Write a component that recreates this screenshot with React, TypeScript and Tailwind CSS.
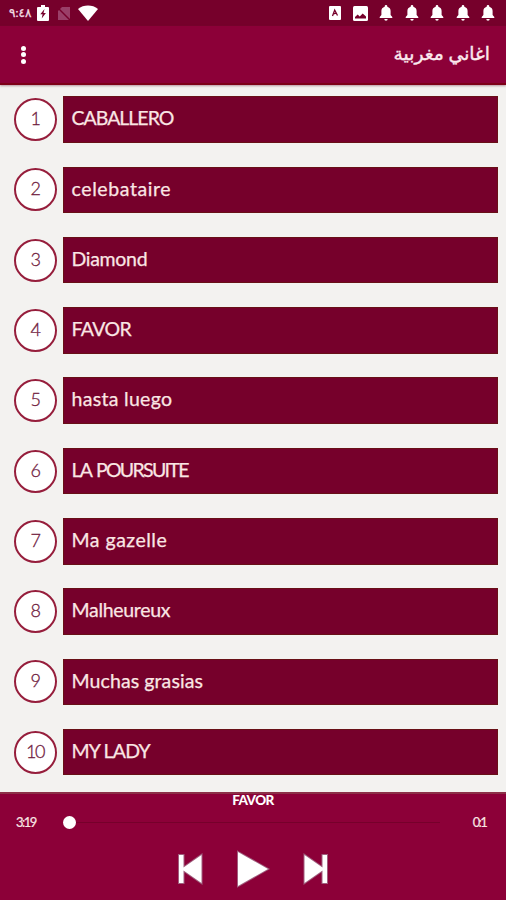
import { useState } from 'react'

const songs = [
  { title: 'CABALLERO', spacing: 'tracking-[-1px]' },
  { title: 'celebataire', spacing: 'tracking-[0.6px]' },
  { title: 'Diamond', spacing: 'tracking-[-0.3px]' },
  { title: 'FAVOR', spacing: 'tracking-[-0.6px]' },
  { title: 'hasta luego', spacing: 'tracking-[0.3px]' },
  { title: 'LA POURSUITE', spacing: 'tracking-[-1.7px] [word-spacing:2px]' },
  { title: 'Ma gazelle', spacing: 'tracking-[0.5px]' },
  { title: 'Malheureux', spacing: 'tracking-[-0.3px]' },
  { title: 'Muchas grasias', spacing: 'tracking-[0.1px]' },
  { title: 'MY LADY', spacing: 'tracking-[-0.8px]' },
]

function BellIcon() {
  return (
    <svg viewBox="0 0 14 16" className="h-4 w-3.5" fill="currentColor">
      <path d="M7 0c-.8 0-1.3.6-1.3 1.3v.5C3.5 2.4 2.4 4 2.4 6v4L.7 12v1h12.6v-1l-1.7-2V6c0-2-1.1-3.6-3.3-4.2v-.5C8.3.6 7.8 0 7 0zM5.3 14a1.7 1.7 0 0 0 3.4 0z" />
    </svg>
  )
}

function StatusBar() {
  return (
    <div className="flex h-[26px] items-center justify-between bg-[#76002b] pl-[9px] pr-[11px] text-white">
      <div className="flex items-center">
        <span dir="ltr" className="w-[23px] whitespace-nowrap text-[12px] leading-none tracking-[-0.6px] text-[#f3dfe6] [-webkit-text-stroke:0.3px_#f3dfe6]">٩:٤٨</span>
        <svg viewBox="0 0 12 16" className="ml-[5px] h-4 w-3" fill="currentColor">
          <path d="M4 0h4v2h3a1 1 0 0 1 1 1v12a1 1 0 0 1-1 1H1a1 1 0 0 1-1-1V3a1 1 0 0 1 1-1h3z" />
          <path fill="#76002b" d="M7.5 4 3.3 9.3h2.3l-.9 4.2 4.2-5.6H6.500z" />
        </svg>
        <svg viewBox="0 0 14 15" className="ml-2 h-[15px] w-3.5" fill="none">
          <path d="M5 1h8v13H1V5z" fill="#9a3f68" />
          <path d="m0 1 14 14" stroke="#76002b" strokeWidth="1.5" />
        </svg>
        <svg viewBox="0 0 20 16" className="ml-[7px] h-4 w-5" fill="currentColor">
          <path d="M0 4C5.5-.6 14.5-.6 20 4L10 16z" />
        </svg>
      </div>
      <div className="flex items-center">
        <svg viewBox="0 0 12 14" className="h-3.5 w-3" fill="currentColor">
          <rect width="12" height="14" rx="1" />
          <path d="m3.5 10 2.200-6 2.800 5.500M4.300 7.800l3.100-.7" fill="none" stroke="#76002b" strokeWidth="1.3" />
        </svg>
        <svg viewBox="0 0 15 15" className="ml-3 h-[15px] w-[15px]" fill="currentColor">
          <rect width="15" height="15" rx="1.5" />
          <path fill="#76002b" d="M2 12.5V11l2.700-2.500 2 2 3-3L13 10.500v2z" />
        </svg>
        <div className="ml-[11px] flex gap-[11.4px]">
          <BellIcon />
          <BellIcon />
          <BellIcon />
          <BellIcon />
          <BellIcon />
        </div>
      </div>
    </div>
  )
}

function Header() {
  return (
    <header className="flex h-[59px] items-center justify-between border-b-2 border-[#7d0018] bg-[#8c0038] pl-[21px] pr-4 text-[#fbe9ee] shadow-[0_1px_2px_rgba(120,60,80,0.5)]">
      <button type="button" aria-label="Menu" className="flex flex-col gap-[1.5px]">
        <span className="h-[5px] w-[5px] rounded-full bg-white" />
        <span className="h-[5px] w-[5px] rounded-full bg-white" />
        <span className="h-[5px] w-[5px] rounded-full bg-white" />
      </button>
      <h1 dir="rtl" className="whitespace-nowrap pb-[3px] text-[18.7px] leading-none [-webkit-text-stroke:0.4px_#fbe9ee]">اغاني مغربية</h1>
    </header>
  )
}

export default function App() {
  const [current, setCurrent] = useState(3)

  return (
    <div className="flex h-[900px] w-[506px] flex-col overflow-hidden bg-[#f3f2f0] font-['Lato','DejaVu_Sans',sans-serif]">
      <StatusBar />
      <Header />

      <ul className="flex h-[707px] shrink-0 flex-col gap-[23.7px] pl-[14px] pr-2 pt-[11.3px]">
        {songs.map((song, index) => (
          <li key={song.title} className="flex h-[46.6px] shrink-0 items-center" onClick={() => setCurrent(index)}>
            <div className="flex h-[43px] w-[43px] items-center justify-center rounded-full border-2 border-[#961e3c] bg-white pb-[3px] pr-px text-[18px] font-light leading-none tracking-[-1.5px] text-[#70203e] [-webkit-text-stroke:0.3px_#70203e]">
              {index + 1}
            </div>
            <div className={`ml-[5.5px] flex h-full flex-1 items-center whitespace-nowrap border border-[#681017] bg-[#76002b] pb-[3px] pl-[8px] text-[19.5px] leading-none text-[#fae6e4] [-webkit-text-stroke:0.25px_#fae6e4] ${song.spacing}`}>
              {song.title}
            </div>
          </li>
        ))}
      </ul>

      <footer className="flex flex-1 flex-col border-t-2 border-[#8c3048] bg-[#8c0038] text-white">
        <div className="h-[13px] text-center text-[13.5px] font-black leading-[13px] tracking-[-0.6px]">{songs[current].title}</div>
        <div className="flex h-[30px] items-center pl-4 pr-[20px] text-[13px] leading-none text-[#fae6e4]">
          <span className="w-[47px] tracking-[-1.5px] [-webkit-text-stroke:0.2px_#fae6e4]">3:19</span>
          <span className="h-[13px] w-[13px] rounded-full bg-white" />
          <span className="h-px w-[364px] bg-[#76002b]" />
          <span className="ml-auto tracking-[-1.7px] [-webkit-text-stroke:0.2px_#fae6e4]">0:1</span>
        </div>
        <div className="flex items-center justify-center pt-[13px]">
          <button type="button" aria-label="Previous">
            <svg viewBox="0 0 28 34" className="h-[34px] w-7" fill="white" stroke="#a05f7e" strokeWidth="2" paintOrder="stroke">
              <path d="M3 3h4.500v12.500L25.500 3v28L7.500 18.500V31H3z" />
            </svg>
          </button>
          <button type="button" aria-label="Play" className="ml-8">
            <svg viewBox="0 0 34 38" className="h-[38px] w-[34px]" fill="white" stroke="#a05f7e" strokeWidth="2" paintOrder="stroke">
              <path d="m2 2 30 17L2 36z" />
            </svg>
          </button>
          <button type="button" aria-label="Next" className="ml-8">
            <svg viewBox="0 0 28 34" className="h-[34px] w-7" fill="white" stroke="#a05f7e" strokeWidth="2" paintOrder="stroke">
              <path d="M25 3h-4.500v12.500L2.500 3v28l18-12.500V31H25z" />
            </svg>
          </button>
        </div>
      </footer>
    </div>
  )
}
